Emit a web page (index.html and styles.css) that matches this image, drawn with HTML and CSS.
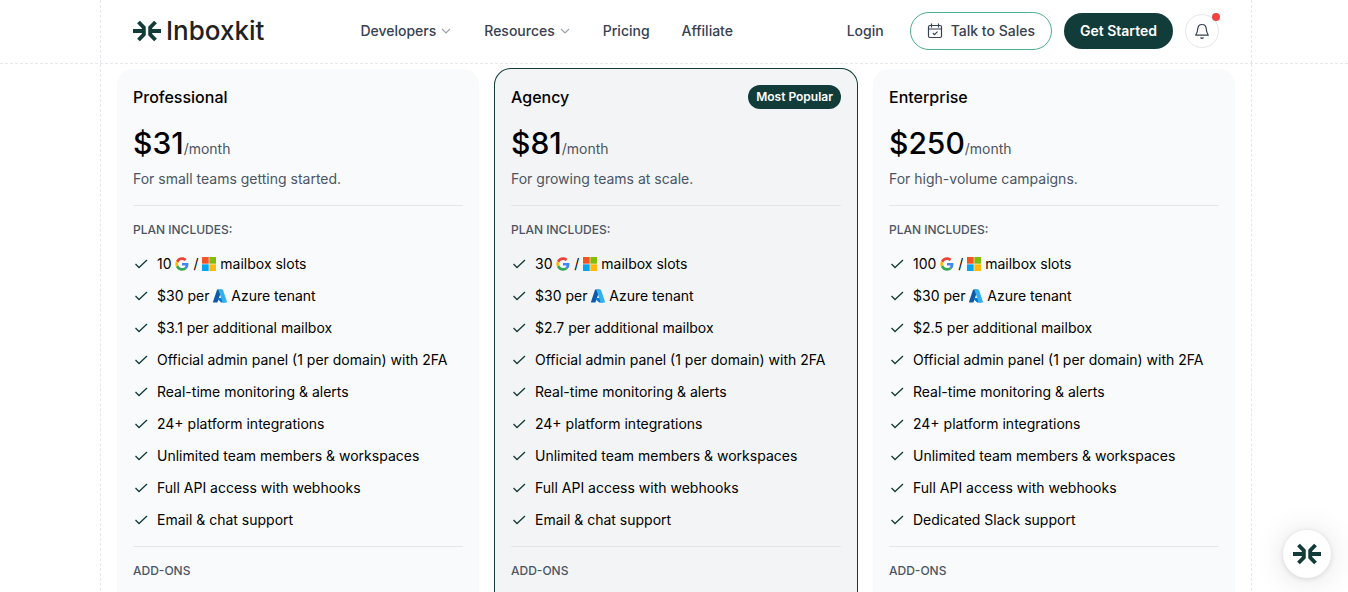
FILE: index.html
```html
<!DOCTYPE html>
<html lang="en">
	<head>
		<meta charset="utf-8" />
		<meta name="viewport" content="width=device-width, initial-scale=1" />
		<title>Inboxkit - Pricing</title>
		<link rel="stylesheet" href="styles.css">
	</head>
	<body>
		<!--shared icons-->
		<svg class="sprite" aria-hidden="true">
			<symbol id="mark" viewBox="0 0 28 22">
				<path d="M0 11h11M5.500 2l5.300 5.500v7l-5.300 5.500M28 11H17M22.500 2l-5.300 5.500v7l5.300 5.500" fill="none" stroke="#123c39" stroke-width="3.900"/>
			</symbol>
			<symbol id="chevron" viewBox="0 0 12 12">
				<path d="M2 4l4 4 4-4" fill="none" stroke="#9ca3af" stroke-width="1.200"/>
			</symbol>
			<symbol id="check" viewBox="0 0 16 16">
				<path d="M2.500 8l3.500 3.500 8-7.500" fill="none" stroke="#123c39" stroke-width="1.300"/>
			</symbol>
			<symbol id="google" viewBox="-1 -1 50 50">
				<path fill="#ea4335" d="M24 9.500c3.540 0 6.710 1.220 9.210 3.600l6.850-6.850C35.900 2.380 30.470 0 24 0 14.620 0 6.510 5.380 2.560 13.220l7.980 6.190C12.430 13.720 17.740 9.500 24 9.500z"/>
				<path fill="#4285f4" d="M46.980 24.550c0-1.570-.15-3.090-.38-4.550H24v9.020h12.940c-.58 2.960-2.260 5.480-4.780 7.180l7.730 6c4.510-4.180 7.090-10.360 7.090-17.650z"/>
				<path fill="#fbbc05" d="M10.530 28.590c-.48-1.450-.76-2.990-.76-4.590s.27-3.140.76-4.590l-7.980-6.190C.92 16.460 0 20.120 0 24c0 3.880.92 7.540 2.560 10.780l7.970-6.190z"/>
				<path fill="#34a853" d="M24 48c6.480 0 11.930-2.130 15.890-5.810l-7.730-6c-2.150 1.450-4.920 2.300-8.160 2.300-6.260 0-11.570-4.220-13.470-9.910l-7.980 6.190C6.510 42.620 14.620 48 24 48z"/>
			</symbol>
			<symbol id="microsoft" viewBox="0 0 14 14">
				<path fill="#f35325" d="M0 0h6.700v6.700H0z"/>
				<path fill="#81bc06" d="M7.300 0H14v6.700H7.300z"/>
				<path fill="#05a6f0" d="M0 7.300h6.700V14H0z"/>
				<path fill="#ffba08" d="M7.300 7.300H14V14H7.300z"/>
			</symbol>
			<symbol id="azure" viewBox="4 5 88 86">
				<path fill="#1259a4" d="M33.300 6.500h26.100L32.300 86.800a4.200 4.200 0 0 1-3.900 2.800H8.100a4.200 4.200 0 0 1-3.900-5.500L29.400 9.400a4.200 4.200 0 0 1 3.900-2.900z"/>
				<path fill="#0078d4" d="M71.200 60.300H29.800a1.900 1.900 0 0 0-1.300 3.300l26.600 24.800a4.200 4.200 0 0 0 2.800 1.100h23.400z"/>
				<path fill="#35b0ee" d="M66.600 9.400a4.200 4.200 0 0 0-4-2.900H33.600a4.200 4.200 0 0 1 4 2.900l25.200 74.700a4.200 4.200 0 0 1-4 5.500h29.100a4.200 4.200 0 0 0 4-5.500z"/>
			</symbol>
		</svg>

		<!--header-->
		<header class="header">
			<div class="container header-inner">
				<a class="logo" href="#"><svg class="logo-mark" aria-hidden="true"><use href="#mark"/></svg><span>Inboxkit</span></a>
				<nav class="nav">
					<button type="button" class="nav-item">Developers <svg class="chevron" aria-hidden="true"><use href="#chevron"/></svg></button>
					<button type="button" class="nav-item">Resources <svg class="chevron" aria-hidden="true"><use href="#chevron"/></svg></button>
					<a class="nav-item" href="#">Pricing</a>
					<a class="nav-item" href="#">Affiliate</a>
				</nav>
				<div class="actions">
					<a class="login" href="#">Login</a>
					<a class="btn btn-sales" href="#">
						<svg class="calendar" viewBox="0 0 16 16" fill="none" stroke="currentColor" stroke-width="1.200" aria-hidden="true">
							<rect x="1.500" y="2.500" width="13" height="12" rx="1.500"/>
							<path d="M1.500 6h13M4.500 0.500v4M11.500 0.500v4M5.800 10l1.700 1.700 3-3"/>
						</svg>
						Talk to Sales
					</a>
					<a class="btn btn-start" href="#">Get Started</a>
					<button type="button" class="bell" aria-label="Notifications">
						<svg class="bell-icon" viewBox="0 0 16 16" fill="none" stroke="currentColor" stroke-width="1.200" stroke-linejoin="round" aria-hidden="true">
							<path d="M8 1.500C5 1.500 3.800 3.800 3.700 6.300 3.600 9 2.900 10.300 1.700 12.200h12.600C13.100 10.300 12.400 9 12.300 6.300 12.200 3.800 11 1.500 8 1.500zM6.500 14.500c.8.800 2.200.8 3 0"/>
						</svg>
						<span class="dot"></span>
					</button>
				</div>
			</div>
		</header>

		<!--plans-->
		<main class="container plans">
			<section class="plan">
				<div class="plan-head"><h2>Professional</h2></div>
				<p class="price"><strong>$31</strong>/month</p>
				<p class="desc">For small teams getting started.</p>
				<h3 class="label">PLAN INCLUDES:</h3>
				<ul class="features">
					<li><svg class="check"><use href="#check"/></svg><span>10 <svg class="brand"><use href="#google"/></svg> / <svg class="brand"><use href="#microsoft"/></svg> mailbox slots</span></li>
					<li><svg class="check"><use href="#check"/></svg><span>$30 per <svg class="brand"><use href="#azure"/></svg> Azure tenant</span></li>
					<li><svg class="check"><use href="#check"/></svg>$3.1 per additional mailbox</li>
					<li><svg class="check"><use href="#check"/></svg>Official admin panel (1 per domain) with 2FA</li>
					<li><svg class="check"><use href="#check"/></svg>Real-time monitoring &amp; alerts</li>
					<li><svg class="check"><use href="#check"/></svg>24+ platform integrations</li>
					<li><svg class="check"><use href="#check"/></svg>Unlimited team members &amp; workspaces</li>
					<li><svg class="check"><use href="#check"/></svg>Full API access with webhooks</li>
					<li><svg class="check"><use href="#check"/></svg>Email &amp; chat support</li>
				</ul>
				<h3 class="label">ADD-ONS</h3>
			</section>
			<section class="plan popular">
				<div class="plan-head"><h2>Agency</h2><span class="badge">Most Popular</span></div>
				<p class="price"><strong>$81</strong>/month</p>
				<p class="desc">For growing teams at scale.</p>
				<h3 class="label">PLAN INCLUDES:</h3>
				<ul class="features">
					<li><svg class="check"><use href="#check"/></svg><span>30 <svg class="brand"><use href="#google"/></svg> / <svg class="brand"><use href="#microsoft"/></svg> mailbox slots</span></li>
					<li><svg class="check"><use href="#check"/></svg><span>$30 per <svg class="brand"><use href="#azure"/></svg> Azure tenant</span></li>
					<li><svg class="check"><use href="#check"/></svg>$2.7 per additional mailbox</li>
					<li><svg class="check"><use href="#check"/></svg>Official admin panel (1 per domain) with 2FA</li>
					<li><svg class="check"><use href="#check"/></svg>Real-time monitoring &amp; alerts</li>
					<li><svg class="check"><use href="#check"/></svg>24+ platform integrations</li>
					<li><svg class="check"><use href="#check"/></svg>Unlimited team members &amp; workspaces</li>
					<li><svg class="check"><use href="#check"/></svg>Full API access with webhooks</li>
					<li><svg class="check"><use href="#check"/></svg>Email &amp; chat support</li>
				</ul>
				<h3 class="label">ADD-ONS</h3>
			</section>
			<section class="plan">
				<div class="plan-head"><h2>Enterprise</h2></div>
				<p class="price"><strong>$250</strong>/month</p>
				<p class="desc">For high-volume campaigns.</p>
				<h3 class="label">PLAN INCLUDES:</h3>
				<ul class="features">
					<li><svg class="check"><use href="#check"/></svg><span>100 <svg class="brand"><use href="#google"/></svg> / <svg class="brand"><use href="#microsoft"/></svg> mailbox slots</span></li>
					<li><svg class="check"><use href="#check"/></svg><span>$30 per <svg class="brand"><use href="#azure"/></svg> Azure tenant</span></li>
					<li><svg class="check"><use href="#check"/></svg>$2.5 per additional mailbox</li>
					<li><svg class="check"><use href="#check"/></svg>Official admin panel (1 per domain) with 2FA</li>
					<li><svg class="check"><use href="#check"/></svg>Real-time monitoring &amp; alerts</li>
					<li><svg class="check"><use href="#check"/></svg>24+ platform integrations</li>
					<li><svg class="check"><use href="#check"/></svg>Unlimited team members &amp; workspaces</li>
					<li><svg class="check"><use href="#check"/></svg>Full API access with webhooks</li>
					<li><svg class="check"><use href="#check"/></svg>Dedicated Slack support</li>
				</ul>
				<h3 class="label">ADD-ONS</h3>
			</section>
		</main>

		<!--chat launcher-->
		<button type="button" class="chat" aria-label="Open chat"><svg class="chat-mark" aria-hidden="true"><use href="#mark"/></svg></button>
	</body>
</html>
```
FILE: styles.css
```css
*{
	box-sizing: border-box;
}
body,h2,h3,p,ul{
	margin: 0;
	padding: 0;
}
body{
	display: flex;
	flex-direction: column;
	height: 100vh;
	padding-left: 4px;
	overflow: hidden;
	background: #fff;
	color: #000;
	font: 14px/20px Inter, sans-serif;
}
a{
	color: inherit;
	text-decoration: none;
}
button{
	padding: 0;
	border: 0;
	background: none;
	color: inherit;
	font: inherit;
	cursor: pointer;
}
.sprite{
	position: absolute;
	width: 0;
	height: 0;
}
.header{
	flex: none;
	margin-left: -4px;
	padding-left: 4px;
	border-bottom: 1px dashed #e5e7eb;
}
.container{
	width: 100%;
	max-width: 1152px;
	margin: 0 auto;
	border: 0 dashed #e5e7eb;
	border-width: 0 1px;
}

/* header */
.header-inner{
	display: flex;
	align-items: center;
	height: 63px;
	padding: 0 32px 2px;
	color: #374151;
	font-weight: 500;
}
.logo{
	display: flex;
	align-items: center;
	gap: 5px;
	color: #222;
	font-size: 26px;
	line-height: 32px;
}
.logo-mark{
	width: 28px;
	height: 22px;
}
.nav{
	display: flex;
	gap: 32px;
	margin-left: 96px;
}
.nav-item{
	display: flex;
	align-items: center;
	gap: 4px;
}
.chevron{
	width: 12px;
	height: 12px;
}
.actions{
	display: flex;
	align-items: center;
	gap: 12px;
	margin-left: auto;
}
.login{
	margin-right: 14px;
}
.btn{
	display: flex;
	align-items: center;
	gap: 8px;
	height: 36px;
	padding: 0 16px;
	border-radius: 20px;
	white-space: nowrap;
}
.btn-sales{
	height: 38px;
	border: 1px solid #4fae8b;
}
.calendar,
.bell-icon{
	width: 16px;
	height: 16px;
}
.btn-start{
	background: #123c39;
	color: #fff;
	font-weight: 600;
}
.bell{
	position: relative;
	display: flex;
	align-items: center;
	justify-content: center;
	width: 34px;
	height: 34px;
	border: 1px solid #e5e7eb;
	border-radius: 50%;
}
.dot{
	position: absolute;
	top: -2px;
	right: -2px;
	width: 8px;
	height: 8px;
	border-radius: 50%;
	background: #ef4444;
}

/* plans */
.plans{
	flex: 1 0 auto;
	display: grid;
	grid-template-columns: repeat(3, 1fr);
	gap: 16px;
	padding: 5px 16px 0;
}
.plan{
	padding: 16px 16px 32px;
	border-radius: 16px 16px 0 0;
	background: #f9fafb;
}
.popular{
	background: #f3f4f6;
	box-shadow: 0 0 0 1px #123c39;
}
.plan-head{
	display: flex;
	align-items: center;
	justify-content: space-between;
	height: 24px;
}
.plan-head h2{
	font-size: 16px;
	line-height: 24px;
	font-weight: 500;
}
.badge{
	padding: 2px 8px;
	border-radius: 12px;
	background: #123c39;
	color: #fff;
	font-size: 12px;
	font-weight: 600;
}
.price{
	margin-top: 16px;
	color: #4b5563;
	line-height: 36px;
}
.price strong{
	color: #000;
	font-size: 30px;
	font-weight: 500;
}
.desc{
	margin-top: 2px;
	color: #4b5563;
}
.label{
	margin-top: 16px;
	padding-top: 16px;
	border-top: 1px solid #e5e7eb;
	color: #4b5563;
	font-size: 12px;
	line-height: 16px;
	font-weight: 500;
}
.features{
	display: grid;
	gap: 12px;
	margin-top: 16px;
	list-style: none;
}
.features li{
	display: flex;
	align-items: center;
	gap: 8px;
}
.check{
	flex: none;
	width: 16px;
	height: 16px;
}
.brand{
	width: 14px;
	height: 14px;
	vertical-align: -2px;
}

/* chat launcher */
.chat{
	position: fixed;
	right: 17px;
	bottom: 14px;
	display: flex;
	align-items: center;
	justify-content: center;
	width: 48px;
	height: 48px;
	border-radius: 50%;
	background: #fff;
	box-shadow: 0 1px 6px rgba(0, 0, 0, .12), 0 2px 32px rgba(0, 0, 0, .12);
}
.chat-mark{
	width: 28px;
	height: 22px;
}
```
